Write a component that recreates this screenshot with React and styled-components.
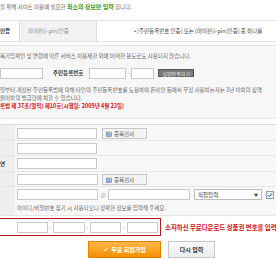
import React from "react";
import styled, { createGlobalStyle } from "styled-components";

const Global = createGlobalStyle`
  html, body { margin: 0; padding: 0; background: #fff; }
  body {
    width: 276px; height: 260px; overflow: hidden;
    font-family: "Noto Sans CJK KR", "Noto Sans", sans-serif;
    font-size: 5.5px; color: #666;
  }
  * { box-sizing: border-box; }
`;

const Page = styled.div`
  width: 276px;
  display: flex;
  flex-direction: column;
`;

const Line = styled.div`
  white-space: nowrap;
  overflow: hidden;
  line-height: ${(p) => p.$lh || 8}px;
  color: ${(p) => (p.$red ? "#d81010" : p.$dark ? "#444" : "#666")};
  font-weight: ${(p) => (p.$red ? 700 : 400)};
`;

const Intro = styled(Line)`
  padding-top: 2px;
  height: 20px;
`;

const Green = styled.b`
  color: #2f9a1f;
  font-weight: 700;
  font-size: 6px;
`;

const TabBar = styled.div`
  display: flex;
  align-items: stretch;
  height: 22px;
  border-top: 1px solid #e2e2e2;
  border-bottom: 1px solid #e2e2e2;
`;

const Tab = styled.div`
  display: flex;
  align-items: center;
  padding: 0 ${(p) => (p.$active ? 6 : 8)}px 0 ${(p) => (p.$active ? 0 : 8)}px;
  width: ${(p) => p.$w}px;
  background: ${(p) => (p.$active ? "#fff" : "#f2f2f2")};
  border-right: 1px solid #dcdcdc;
  color: ${(p) => (p.$active ? "#333" : "#8a8a8a")};
  font-weight: ${(p) => (p.$active ? 700 : 400)};
  white-space: nowrap;
`;

const TabNote = styled.div`
  flex: 1;
  display: flex;
  align-items: center;
  padding-left: 37px;
  white-space: nowrap;
  overflow: hidden;
  color: #444;
`;

const Notice = styled.div`
  margin-top: 3px;
  background: #f7f7f7;
  border-top: 1px solid #e6e6e6;
  border-bottom: 1px solid #e6e6e6;
  padding: 5px 0 8px;
  display: flex;
  flex-direction: column;
`;

const RrnRow = styled.div`
  display: flex;
  align-items: center;
  height: 12px;
  margin: 6px 0 7px;
`;

const Input = styled.input`
  width: ${(p) => p.$w}px;
  height: 11px;
  margin: 0;
  padding: 0;
  border: 1px solid #c9c9c9;
  background: #fff;
  flex: none;
`;

const FieldLabel = styled.span`
  margin: 0 6px 0 10px;
  color: #333;
  font-weight: 700;
  white-space: nowrap;
`;

const Dash = styled.span`
  width: ${(p) => p.$w || 5}px;
  text-align: center;
  color: #888;
  flex: none;
`;

const DarkButton = styled.span`
  margin-left: 4px;
  height: 8px;
  padding: 0 3px;
  display: flex;
  align-items: center;
  background: #7a7a7a;
  border: 1px solid #555;
  color: #e8e8e8;
  font-size: 5px;
  white-space: nowrap;
`;

const FormTable = styled.div`
  margin-top: 5px;
  border-top: 1px solid #dcdcdc;
  display: flex;
  flex-direction: column;
`;

const Row = styled.div`
  display: flex;
  min-height: ${(p) => p.$h}px;
  border-bottom: 1px solid #e6e6e6;
`;

const LabelCell = styled.div`
  width: 15px;
  flex: none;
  background: #efefef;
  color: #333;
  font-weight: 700;
  display: flex;
  align-items: center;
  white-space: nowrap;
  overflow: hidden;
`;

const FieldCell = styled.div`
  flex: 1;
  background: #f8f8f8;
  padding: ${(p) => p.$pt || 2}px 0 0 2px;
  display: flex;
  flex-direction: column;
`;

const Fields = styled.div`
  display: flex;
  align-items: center;
  height: 11px;
`;

const CheckBtn = styled.span`
  margin-left: ${(p) => p.$ml || 5}px;
  width: 45px;
  height: 11px;
  display: flex;
  align-items: center;
  gap: 2px;
  padding-left: 3px;
  background: #f4f4f4;
  border: 1px solid #c6c6c6;
  color: #555;
  white-space: nowrap;
`;

const At = styled.span`
  width: 10px;
  text-align: center;
  color: #888;
`;

const Select = styled.span`
  margin-left: 4px;
  width: 68px;
  height: 11px;
  border: 1px solid #bdbdbd;
  background: #fff;
  display: flex;
  align-items: center;
  justify-content: space-between;
  padding: 0 3px;
  color: #333;
`;

const Arrow = styled.span`
  font-size: 4px;
  color: #333;
`;

const Check = styled.span`
  margin-left: 4px;
  width: 8px;
  height: 8px;
  border: 1px solid #8aa0b8;
  background: #eef3f8;
  display: flex;
  align-items: center;
  justify-content: center;
`;

const Help = styled(Line)`
  margin-top: 4px;
  line-height: 8px;
`;

const RedRow = styled.div`
  margin-top: 2px;
  display: flex;
  align-items: center;
  overflow: hidden;
`;

const RedBox = styled.div`
  width: 161px;
  height: 18px;
  flex: none;
  border: 1px solid #b51c1c;
  border-left: none;
  display: flex;
  align-items: center;
  padding-left: 17px;
`;

const RedNote = styled.span`
  margin-left: 4px;
  color: #d81010;
  font-weight: 700;
  font-size: 6.4px;
  white-space: nowrap;
`;

const Actions = styled.div`
  display: flex;
  margin: 5px 0 0 88px;
  gap: 7px;
`;

const PrimaryBtn = styled.span`
  width: 73px;
  height: 17px;
  display: flex;
  align-items: center;
  justify-content: center;
  gap: 3px;
  background: linear-gradient(#ffb84d, #f39000);
  border: 1px solid #e08400;
  color: #fff;
  font-weight: 700;
  font-size: 6px;
`;

const SecondaryBtn = styled.span`
  width: 47px;
  height: 17px;
  display: flex;
  align-items: center;
  justify-content: center;
  background: linear-gradient(#fafafa, #ececec);
  border: 1px solid #c8c8c8;
  color: #333;
  font-weight: 700;
  font-size: 6px;
`;

const SearchIcon = () => (
  <svg width="6" height="6" viewBox="0 0 6 6">
    <rect x="0.5" y="1" width="5" height="4.5" fill="#8fb6e0" stroke="#5b86b8" strokeWidth="0.6" />
    <circle cx="4.3" cy="1.3" r="1" fill="#f2d36b" />
  </svg>
);

export default function App() {
  return (
    <Page>
      <Global />
      <Intro $lh={10}>
        을 위해 사이트 이용에 필요한 <Green>최소의 정보만 입력</Green> 합니다.
      </Intro>
      <TabBar>
        <Tab $active $w={20}>인증</Tab>
        <Tab $w={77}>아이핀(i-pin)인증</Tab>
        <TabNote>• [주민등록번호 인증] 또는 [아이핀(i-pin)인증] 중 하나를</TabNote>
      </TabBar>
      <Notice>
        <Line $lh={10}>복가입확인 및 연령에 따른 서비스 이용제한 외에 어떠한 용도로도 사용되지 않습니다.</Line>
        <RrnRow>
          <Input $w={43} readOnly />
          <FieldLabel>주민등록번호</FieldLabel>
          <Input $w={37} readOnly />
          <Dash>-</Dash>
          <Input $w={23} readOnly />
          <DarkButton>실명인증하기</DarkButton>
        </RrnRow>
        <Line>일부터 개정된 주민등록법에 의해 타인의 주민등록번호를 도용하여 온라인 등에서 무정 사용하는자는 3년 이하의 징역</Line>
        <Line>원이하의 벌금형에 처할 수 있습니다.</Line>
        <Line $red>록법 제 37조(벌칙) 제10호(시행일: 2009년 4월 23일)</Line>
      </Notice>
      <FormTable>
        <Row $h={16}>
          <LabelCell />
          <FieldCell $pt={3}>
            <Fields>
              <Input $w={80} readOnly />
              <CheckBtn><SearchIcon />중복검사</CheckBtn>
            </Fields>
          </FieldCell>
        </Row>
        <Row $h={15}>
          <LabelCell />
          <FieldCell>
            <Fields><Input $w={80} readOnly /></Fields>
          </FieldCell>
        </Row>
        <Row $h={16}>
          <LabelCell>연</LabelCell>
          <FieldCell>
            <Fields><Input $w={80} readOnly /></Fields>
          </FieldCell>
        </Row>
        <Row $h={15}>
          <LabelCell />
          <FieldCell>
            <Fields>
              <Input $w={81} readOnly />
              <CheckBtn $ml={4}><SearchIcon />중복검사</CheckBtn>
            </Fields>
          </FieldCell>
        </Row>
        <Row $h={29}>
          <LabelCell />
          <FieldCell>
            <Fields>
              <Input $w={81} readOnly />
              <At>@</At>
              <Input $w={82} readOnly />
              <Select>직접입력<Arrow>▼</Arrow></Select>
              <Check>
                <svg width="6" height="6" viewBox="0 0 6 6">
                  <path d="M1 3.2 L2.4 4.6 L5 1.4" fill="none" stroke="#2a4a7a" strokeWidth="1" />
                </svg>
              </Check>
            </Fields>
            <Help>아이디/비밀번호 찾기 시 사용되오니 정확한 정보를 입력해 주세요.</Help>
          </FieldCell>
        </Row>
      </FormTable>
      <RedRow>
        <RedBox>
          <Input $w={31} readOnly />
          <Dash $w={5}>-</Dash>
          <Input $w={32} readOnly />
          <Dash $w={5}>-</Dash>
          <Input $w={31} readOnly />
          <Dash $w={6}>-</Dash>
          <Input $w={31} readOnly />
        </RedBox>
        <RedNote>소지하신 무료다운로드 상품권 번호를 입력</RedNote>
      </RedRow>
      <Actions>
        <PrimaryBtn>
          <svg width="5" height="5" viewBox="0 0 6 6">
            <path d="M0.8 3.2 L2.4 4.8 L5.3 1.2" fill="none" stroke="#fff" strokeWidth="1.2" />
          </svg>
          무료 회원가입
        </PrimaryBtn>
        <SecondaryBtn>다시 입력</SecondaryBtn>
      </Actions>
    </Page>
  );
}
